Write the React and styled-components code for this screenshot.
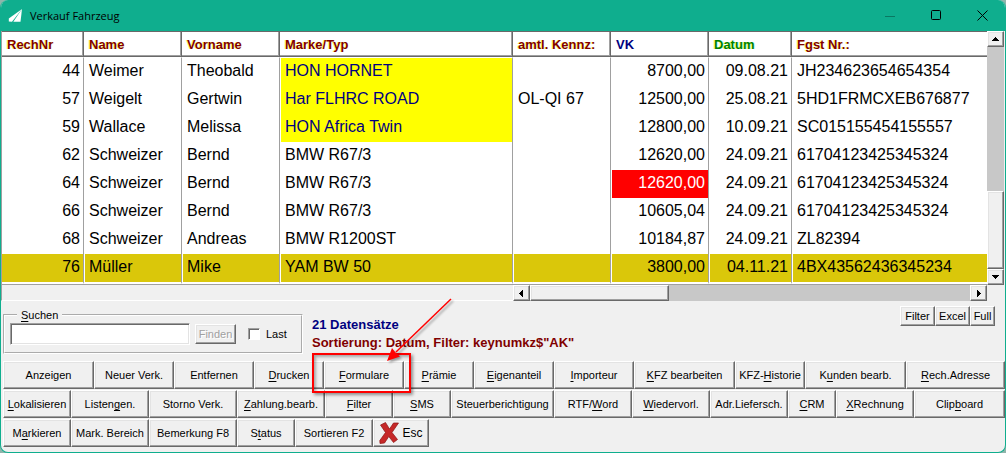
import React from 'react'
import styled, { createGlobalStyle, css } from 'styled-components'

const GlobalStyle = createGlobalStyle`
    * {
        box-sizing: border-box;
    }
    body {
        margin: 0;
        background-color: #8fb5ab;
        font-family: "Liberation Sans", Arial, sans-serif;
        font-size: 11px;
        color: #000;
    }
    button, input {
        font-family: inherit;
        font-size: inherit;
        color: inherit;
    }
`

const raised = css`
    background-color: #f0f0f0;
    border: 1px solid;
    border-color: #fff #696969 #696969 #fff;
    box-shadow: inset -1px -1px 0 #a0a0a0, inset 1px 1px 0 #e3e3e3;
`

const Window = styled.div`
    min-height: 100vh;
    display: flex;
    flex-direction: column;
    background-color: #f0f0f0;
    border: 1px solid #0fae8e;
    border-top: none;
    border-radius: 8px;
    overflow: hidden;
`

const TitleBar = styled.header`
    height: 31px;
    display: flex;
    align-items: center;
    padding-left: 7px;
    background-color: #0fae8e;
`

const Title = styled.h1`
    flex: 1;
    margin: 0 0 0 7px;
    font-family: "Open Sans", "Noto Sans", sans-serif;
    font-size: 11px;
    font-weight: 400;
`

const WindowButton = styled.button`
    width: 46px;
    height: 31px;
    padding: 0;
    display: flex;
    align-items: center;
    justify-content: center;
    background: none;
    border: none;
    &:disabled {
        opacity: .3;
    }
`

const Grid = styled.div`
    display: grid;
    grid-template-columns: 1fr 17px;
    grid-template-rows: auto 16px;
    padding-right: 1px;
`

const Table = styled.table`
    width: 100%;
    table-layout: fixed;
    border-spacing: 0;
    background-color: #fff;
    border-left: 1px solid #a0a0a0;
    border-bottom: 1px solid #a0a0a0;
`

const HeadCell = styled.th`
    height: 26px;
    padding: 2px 5px 0;
    text-align: left;
    font-size: 13px;
    line-height: 16px;
    white-space: nowrap;
    color: ${props => props.$color || '#800000'};
    text-shadow: ${props => props.$fringe || '-1px 0 0 rgba(255, 255, 0, .6)'};
    border-top: 1px solid #696969;
    border-right: 1px solid #696969;
    border-bottom: 1px solid #696969;
    box-shadow: inset -1px -1px 0 #a0a0a0;
    &:last-child {
        border-right: none;
        box-shadow: inset 0 -1px 0 #a0a0a0;
    }
`

const Cell = styled.td`
    height: 28px;
    padding: 0 3px 2px 4px;
    font-size: 16px;
    line-height: 20px;
    white-space: nowrap;
    text-align: ${props => props.$right ? 'right' : 'left'};
    color: ${props => props.$color || '#000'};
    background-color: ${props => props.$fill || 'transparent'};
    background-clip: padding-box;
    border-left: 1px solid #fff;
    border-right: 1px solid #a0a0a0;
    &:first-child {
        border-left: none;
    }
    &:last-child {
        border-right: none;
    }
    tr:first-child > & {
        height: 29px;
        border-top: 1px solid #fff;
    }
    tr:last-child > & {
        height: 30px;
        border-bottom: 2px solid #fff;
    }
`

const ScrollBar = styled.div`
    display: flex;
    flex-direction: ${props => props.$vertical ? 'column' : 'row'};
    background-color: #c8c8c8;
`

const ScrollButton = styled.button`
    ${raised}
    width: 17px;
    min-height: 16px;
    flex: none;
    padding: 0;
    display: flex;
    align-items: center;
    justify-content: center;
`

const Track = styled.div`
    flex: ${props => props.$size};
`

const Thumb = styled.div`
    ${raised}
    flex: ${props => props.$size};
`

const BottomLeft = styled.div`
    flex: 512;
    border-left: 1px solid #a0a0a0;
    border-bottom: 1px solid #fff;
    background-color: #f0f0f0;
`

const BottomRow = styled.div`
    display: flex;
`

const BottomScroll = styled(ScrollBar)`
    flex: 475;
`

const InfoBar = styled.section`
    display: flex;
    align-items: flex-start;
    padding: 5px 10px 7px 2px;
`

const SearchBox = styled.fieldset`
    width: 300px;
    height: 46px;
    margin: 2px 0 0;
    padding: 0 5px;
    border: 2px groove #fff;
`

const Legend = styled.legend`
    margin-left: 7px;
    padding: 0 4px;
    line-height: 14px;
`

const SearchRow = styled.div`
    display: flex;
    align-items: center;
    padding-top: 1px;
`

const SearchInput = styled.input`
    width: 180px;
    height: 22px;
    padding: 0 3px;
    background-color: #fff;
    border: 1px solid;
    border-color: #a0a0a0 #fff #fff #a0a0a0;
    box-shadow: inset 1px 1px 0 #696969, inset -1px -1px 0 #e3e3e3;
    outline: none;
`

const SmallButton = styled.button`
    ${raised}
    width: ${props => props.$width}px;
    height: 20px;
    padding: 0;
    &:disabled {
        color: #a0a0a0;
        text-shadow: 1px 1px 0 #fff;
    }
`

const FindButton = styled(SmallButton)`
    margin: 0 12px 0 5px;
`

const CheckLabel = styled.label`
    display: flex;
    align-items: center;
    gap: 6px;
`

const Check = styled.input`
    appearance: none;
    width: 12px;
    height: 12px;
    margin: 0;
    background-color: #fff;
    border: 1px solid;
    border-color: #a0a0a0 #fff #fff #a0a0a0;
    box-shadow: inset 1px 1px 0 #696969;
`

const Status = styled.div`
    flex: 1;
    margin: 10px 0 0 9px;
    font-size: 13px;
    font-weight: 700;
    line-height: 18px;
`

const StatusLine = styled.p`
    margin: 0;
    color: ${props => props.$color};
`

const ButtonRows = styled.nav`
    display: flex;
    flex-direction: column;
    gap: 1px;
    padding-left: 2px;
`

const ButtonRow = styled.div`
    display: flex;
`

const Slot = styled.div`
    position: relative;
    display: flex;
    flex: ${props => props.$fixed ? 'none' : props.$width};
    width: ${props => props.$fixed ? props.$width + 'px' : 'auto'};
    min-width: 0;
`

const ActionButton = styled.button`
    ${raised}
    flex: 1;
    height: 28px;
    padding: 0;
    display: flex;
    align-items: center;
    justify-content: center;
    gap: 3px;
    white-space: nowrap;
    font-size: ${props => props.$large ? '12px' : '11px'};
`

const Key = styled.u`
    text-underline-offset: 2px;
`

const Marker = styled.div`
    position: absolute;
    z-index: 1;
    top: -8px;
    right: -7px;
    bottom: -4px;
    left: -12px;
    border: 2px solid #f00;
    box-shadow: 2px 2px 3px rgba(0, 0, 0, .4), inset 2px 2px 3px rgba(0, 0, 0, .3);
    pointer-events: none;
`

const Arrow = styled.svg`
    position: absolute;
    z-index: 2;
    right: -51px;
    bottom: 26px;
    filter: drop-shadow(2px 2px 1px rgba(0, 0, 0, .35));
    pointer-events: none;
`

const columns = [
    { name: 'RechNr', width: 82, right: true },
    { name: 'Name', width: 98 },
    { name: 'Vorname', width: 98 },
    { name: 'Marke/Typ', width: 233 },
    { name: 'amtl. Kennz:', width: 98 },
    { name: 'VK', width: 98, right: true, color: '#000080', fringe: 'none' },
    { name: 'Datum', width: 83, right: true, color: '#008000', fringe: '-1px 0 0 rgba(255, 255, 0, .6), 1px 0 0 rgba(0, 255, 255, .25)' },
    { name: 'Fgst Nr.:', width: 195 }
]

const rows = [
    ['44', 'Weimer', 'Theobald', 'HON HORNET', '', '8700,00', '09.08.21', 'JH234623654654354'],
    ['57', 'Weigelt', 'Gertwin', 'Har FLHRC ROAD', 'OL-QI 67', '12500,00', '25.08.21', '5HD1FRMCXEB676877'],
    ['59', 'Wallace', 'Melissa', 'HON Africa Twin', '', '12800,00', '10.09.21', 'SC015155454155557'],
    ['62', 'Schweizer', 'Bernd', 'BMW R67/3', '', '12620,00', '24.09.21', '61704123425345324'],
    ['64', 'Schweizer', 'Bernd', 'BMW R67/3', '', '12620,00', '24.09.21', '61704123425345324'],
    ['66', 'Schweizer', 'Bernd', 'BMW R67/3', '', '10605,04', '24.09.21', '61704123425345324'],
    ['68', 'Schweizer', 'Andreas', 'BMW R1200ST', '', '10184,87', '24.09.21', 'ZL82394'],
    ['76', 'Müller', 'Mike', 'YAM BW 50', '', '3800,00', '04.11.21', '4BX43562436345234']
]

// the & stands before the shortcut letter
const actions = [
    [
        ['Anzeigen', 91], ['Neuer Verk.', 80], ['Entfernen', 80], ['&Drucken', 70],
        ['&Formulare', 80], ['&Prämie', 70], ['&Eigenanteil', 80], ['&Importeur', 80],
        ['&KFZ bearbeiten', 101], ['KFZ-&Historie', 70], ['K&unden bearb.', 101], ['&Rech.Adresse', 99]
    ],
    [
        ['&Lokalisieren', 68], ['Listen&gen.', 78], ['Storno Verk.', 88], ['&Zahlung.bearb.', 88],
        ['&Filter', 68], ['&SMS', 58], ['Steuerberichtigung', 103], ['RTF/&Word', 78],
        ['&Wiedervorl.', 78], ['Adr.Liefersch.', 78], ['&CRM', 48], ['&XRechnung', 78], ['Clip&board', 91]
    ],
    [
        ['M&arkieren', 68], ['Mark. Bereich', 78], ['Bemerkung F8', 88], ['S&tatus', 58],
        ['Sortieren F2', 78], ['Esc', 56]
    ]
]

const cellLook = (row, col) => {
    if (row === 7) return { $fill: '#dac70a' }
    if (col === 3 && row < 3) return { $fill: '#ff0', $color: '#000080' }
    if (col === 5 && row === 4) return { $fill: '#f00', $color: '#fff' }
    return {}
}

const triangles = {
    up: 'M0 4h7L3.5 0z',
    down: 'M0 0h7L3.5 4z',
    left: 'M4 0v7L0 3.5z',
    right: 'M0 0v7L4 3.5z'
}

const Scroller = ({ direction, label }) => (
    <ScrollButton aria-label={label}>
        <svg width={direction === 'up' || direction === 'down' ? 7 : 4} height={direction === 'up' || direction === 'down' ? 4 : 7} shapeRendering="crispEdges">
            <path d={triangles[direction]} />
        </svg>
    </ScrollButton>
)

const PlaneIcon = () => (
    <svg width="15" height="15" viewBox="0 0 15 15">
        <path d="M14 1L.8 10.500V13.500L4 13.800z" fill="#fff" />
        <path d="M14 1L5.300 13.800L12.500 13.800z" fill="#fff" />
    </svg>
)

const CrossIcon = () => (
    <svg width="20" height="22" viewBox="0 0 20 22">
        <path
            d="M1.500 3L6.500 .5L10.500 7L14.500 1L19.500 1L13 10.500L18.500 17.500L14.500 20.500L9.800 14.500L5.500 21L1 21.500L.8 18.500L6.500 10.500z"
            fill="#c62828"
            stroke="#8c1414"
            strokeWidth=".7"
            strokeLinejoin="round"
        />
    </svg>
)

const Label = ({ text }) => {
    const at = text.indexOf('&')
    if (at < 0) return <span>{text}</span>
    return <span>{text.slice(0, at)}<Key>{text[at + 1]}</Key>{text.slice(at + 2)}</span>
}

const Action = ({ text, width, fixed }) => (
    <Slot $width={width} $fixed={fixed}>
        <ActionButton $large={text === 'Esc'}>
            {text === 'Esc' && <CrossIcon />}
            <Label text={text} />
        </ActionButton>
        {text === '&Formulare' && (
            <>
                <Marker />
                <Arrow width="74" height="66" viewBox="0 0 74 66">
                    <path d="M70 2L15 55" stroke="#f00" strokeWidth="1.500" />
                    <path d="M6 64L11 51L14.500 55.500L19 59.500z" fill="#f00" />
                </Arrow>
            </>
        )}
    </Slot>
)

const App = () => (
    <Window>
        <GlobalStyle />
        <TitleBar>
            <PlaneIcon />
            <Title>Verkauf Fahrzeug</Title>
            <WindowButton aria-label="Minimieren" disabled>
                <svg width="10" height="10"><path d="M0 5.500h10" stroke="#000" /></svg>
            </WindowButton>
            <WindowButton aria-label="Maximieren">
                <svg width="11" height="11"><rect x=".5" y=".5" width="9" height="9" rx="1" fill="none" stroke="#000" /></svg>
            </WindowButton>
            <WindowButton aria-label="Schließen">
                <svg width="11" height="11"><path d="M.5 .5l10 10M10.500 .5l-10 10" stroke="#000" /></svg>
            </WindowButton>
        </TitleBar>
        <Grid>
            <Table>
                <colgroup>
                    {columns.map(column => <col key={column.name} style={{ width: `${column.width / 9.85}%` }} />)}
                </colgroup>
                <thead>
                    <tr>
                        {columns.map(column => (
                            <HeadCell key={column.name} $color={column.color} $fringe={column.fringe}>{column.name}</HeadCell>
                        ))}
                    </tr>
                </thead>
                <tbody>
                    {rows.map((row, r) => (
                        <tr key={row[0]}>
                            {row.map((value, c) => (
                                <Cell key={c} $right={columns[c].right} {...cellLook(r, c)}>{value}</Cell>
                            ))}
                        </tr>
                    ))}
                </tbody>
            </Table>
            <ScrollBar $vertical>
                <Scroller direction="up" label="Nach oben" />
                <Track $size={143} />
                <Thumb $size={76} />
                <Scroller direction="down" label="Nach unten" />
            </ScrollBar>
            <BottomRow>
                <BottomLeft />
                <BottomScroll>
                    <Scroller direction="left" label="Nach links" />
                    <Thumb $size={138} />
                    <Track $size={302} />
                    <Scroller direction="right" label="Nach rechts" />
                </BottomScroll>
            </BottomRow>
        </Grid>
        <InfoBar>
            <SearchBox>
                <Legend><Label text="&Suchen" /></Legend>
                <SearchRow>
                    <SearchInput type="text" aria-label="Suchen" />
                    <FindButton $width={41} disabled>Finden</FindButton>
                    <CheckLabel>
                        <Check type="checkbox" />
                        Last
                    </CheckLabel>
                </SearchRow>
            </SearchBox>
            <Status>
                <StatusLine $color="#000080">21 Datensätze</StatusLine>
                <StatusLine $color="#800000">Sortierung: Datum, Filter: keynumkz$"AK"</StatusLine>
            </Status>
            <SmallButton $width={35}>Filter</SmallButton>
            <SmallButton $width={35}>Excel</SmallButton>
            <SmallButton $width={25}>Full</SmallButton>
        </InfoBar>
        <ButtonRows>
            {actions.map((row, r) => (
                <ButtonRow key={r}>
                    {row.map(([text, width]) => <Action key={text} text={text} width={width} fixed={r === 2} />)}
                </ButtonRow>
            ))}
        </ButtonRows>
    </Window>
)

export default App
